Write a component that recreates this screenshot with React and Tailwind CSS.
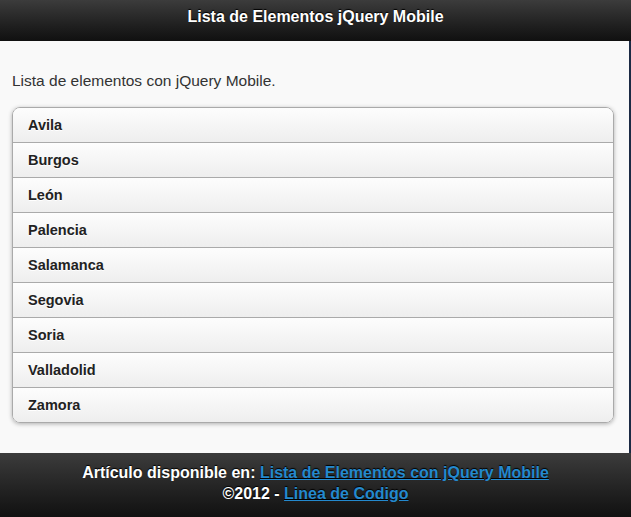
const cities = [
  'Avila',
  'Burgos',
  'León',
  'Palencia',
  'Salamanca',
  'Segovia',
  'Soria',
  'Valladolid',
  'Zamora',
];

export default function App() {
  return (
    <div className="flex min-h-[517px] w-[631px] flex-col bg-[#f9f9f9] font-['Liberation_Sans',Arial,sans-serif]">
      <header className="flex h-[41px] items-center justify-center border-b border-[#111] bg-gradient-to-b from-[#3c3c3c] to-[#111] pb-[6px] text-[16px] font-bold text-white [text-shadow:0_-1px_1px_#000]">
        Lista de Elementos jQuery Mobile
      </header>

      <main className="flex-1 border-r-2 border-[#1b2a44] pt-[30px] pr-[15px] pb-[30px] pl-[12px]">
        <p className="text-[15.5px] leading-[20px] text-[#333]">Lista de elementos con jQuery Mobile.</p>

        <ul className="mt-[16px] overflow-hidden rounded-[8px] border border-[#aaa] shadow-[0_1px_4px_rgba(0,0,0,0.3)]">
          {cities.map((city, index) => (
            <li
              key={city}
              className={`flex items-center bg-gradient-to-b from-[#fdfdfd] to-[#eee] pt-[2px] pl-[15px] text-[14.5px] font-bold text-[#222] [text-shadow:0_1px_0_#fff] ${index > 0 ? 'h-[35px] border-t border-[#aaa]' : 'h-[34px]'}`}
            >
              {city}
            </li>
          ))}
        </ul>
      </main>

      <footer className="flex h-[64px] flex-col items-center justify-center bg-gradient-to-b from-[#3c3c3c] to-[#111] pb-[4px] text-[16px] font-bold leading-[21px] text-white [text-shadow:0_-1px_1px_#000]">
        <p>
          Artículo disponible en:{' '}
          <a href="#" className="text-[#2489ce] underline">
            Lista de Elementos con jQuery Mobile
          </a>
        </p>
        <p>
          ©2012 -{' '}
          <a href="#" className="text-[#2489ce] underline">
            Linea de Codigo
          </a>
        </p>
      </footer>
    </div>
  );
}
